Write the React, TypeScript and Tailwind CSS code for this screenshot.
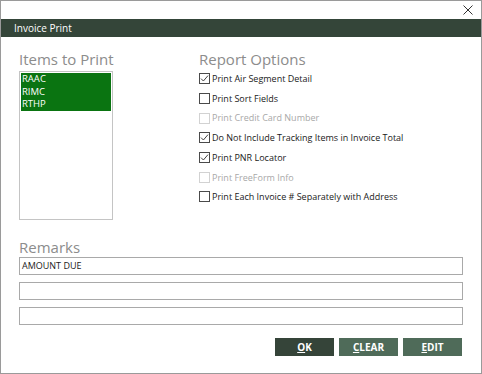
import React from 'react';

const options = [
  { label: 'Print Air Segment Detail', checked: true },
  { label: 'Print Sort Fields', checked: false },
  { label: 'Print Credit Card Number', checked: false, disabled: true },
  { label: 'Do Not Include Tracking Items in Invoice Total', checked: true },
  { label: 'Print PNR Locator', checked: true },
  { label: 'Print FreeForm Info', checked: false, disabled: true },
  { label: 'Print Each Invoice # Separately with Address', checked: false },
];

const items = ['RAAC', 'RIMC', 'RTHP'];

const CheckBox = ({ checked, disabled }: { checked: boolean; disabled?: boolean }) => (
  <span
    className={`flex h-[11px] w-[11px] shrink-0 items-center justify-center border bg-white ${
      disabled ? 'border-[#d2d2d2]' : 'border-[#4a4a4a]'
    }`}
  >
    {checked && (
      <svg width="9" height="9" viewBox="0 0 9 9">
        <path d="M1 4.6 L3.4 7 L8 1.6" fill="none" stroke="#444" strokeWidth="1" />
      </svg>
    )}
  </span>
);

const Btn = ({ first, rest, dark }: { first: string; rest: string; dark?: boolean }) => (
  <button
    className={`flex h-[18px] w-[59px] items-center justify-center text-[10px] font-bold text-white ${
      dark ? 'bg-[#354439]' : 'bg-[#4f6b59]'
    }`}
  >
    <span className="underline underline-offset-1">{first}</span>
    {rest}
  </button>
);

export default function App() {
  return (
    <div
      className="flex h-[374px] w-[482px] flex-col border border-[#9a9a9a] bg-white"
      style={{ fontFamily: '"Open Sans", "Noto Sans", sans-serif' }}
    >
      {/* window chrome */}
      <div className="flex h-[18px] items-center justify-end pr-[8px]">
        <svg width="10" height="10" viewBox="0 0 10 10">
          <path d="M0.5 0.5 L9.5 9.5 M9.5 0.5 L0.5 9.5" stroke="#333" strokeWidth="1" />
        </svg>
      </div>
      <div className="flex h-[18px] items-center bg-[#344539] pl-[13px] text-[10px] text-white">
        Invoice Print
      </div>

      <div className="flex flex-1 flex-col px-[18px]">
        <div className="flex pt-[12px]">
          <div className="flex w-[180px] flex-col">
            <div className="text-[15px] leading-[20px] text-[#8c8c8c]">Items to Print</div>
            <div className="mt-[2px] h-[149px] w-[94px] border border-[#c4c4c4] p-[1px]">
              {items.map(it => (
                <div key={it} className="h-[12.7px] bg-[#0a7411] pl-[1px] text-[9.5px] leading-[12.7px] text-white">
                  {it}
                </div>
              ))}
            </div>
          </div>
          <div className="flex flex-col">
            <div className="text-[15px] leading-[20px] text-[#8c8c8c]">Report Options</div>
            <div className="flex flex-col">
              {options.map(o => (
                <div key={o.label} className="flex h-[19.7px] items-center gap-[2px]">
                  <CheckBox checked={o.checked} disabled={o.disabled} />
                  <span className={`text-[9px] ${o.disabled ? 'text-[#a8a8a8]' : 'text-[#1a1a1a]'}`}>
                    {o.label}
                  </span>
                </div>
              ))}
            </div>
          </div>
        </div>

        <div className="mt-[17px] text-[15px] leading-[20px] text-[#8c8c8c]">Remarks</div>
        <div className="flex flex-col gap-[7px]">
          <div className="flex h-[18px] items-center border border-[#a9a9a9] pl-[2px] text-[9px] text-[#1a1a1a]">
            AMOUNT DUE
          </div>
          <div className="h-[18px] border border-[#a9a9a9]" />
          <div className="h-[18px] border border-[#a9a9a9]" />
        </div>

        <div className="mt-[13px] flex justify-end gap-[5px] pr-[1px]">
          <Btn first="O" rest="K" dark />
          <Btn first="C" rest="LEAR" />
          <Btn first="E" rest="DIT" />
        </div>
      </div>
    </div>
  );
}
